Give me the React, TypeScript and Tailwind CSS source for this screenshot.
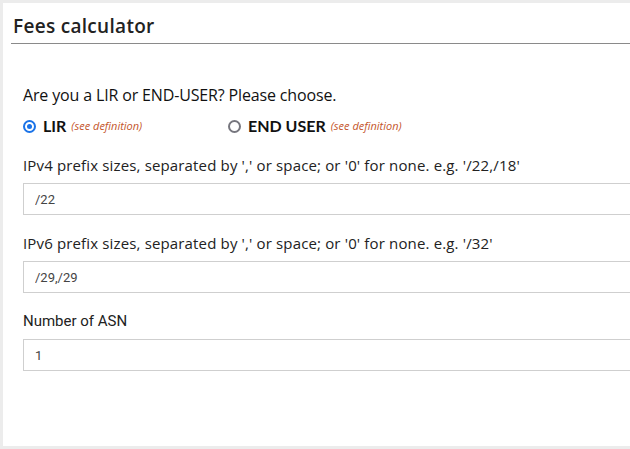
import React, { useState } from 'react';

const Radio = ({ checked }: { checked: boolean }) => (
	<span
		className={
			checked
				? 'flex h-[13px] w-[13px] items-center justify-center rounded-full border-[2px] border-[#1a73e8] bg-white'
				: 'flex h-[13px] w-[13px] items-center justify-center rounded-full border-[2px] border-[#76767e] bg-white'
		}
	>
		{checked && <span className="h-[5px] w-[5px] rounded-full bg-[#1a73e8]" />}
	</span>
);

const Field = ({ label, value, roboto }: { label: string; value: string; roboto?: boolean }) => (
	<div className="flex flex-col">
		<label
			className={
				roboto
					? "text-[15px] leading-[20px] text-[#222] [font-family:Roboto,sans-serif]"
					: "text-[15px] leading-[20px] tracking-[0.15px] text-[#222] [font-family:'Open_Sans',sans-serif]"
			}
		>
			{label}
		</label>
		<input
			defaultValue={value}
			className="mt-[8px] h-[32px] w-[620px] border border-[#cfcfcf] px-[11px] text-[13px] text-[#444] outline-none [font-family:Roboto,sans-serif]"
		/>
	</div>
);

export default function App() {
	const [kind, setKind] = useState('lir');

	return (
		<div className="h-[449px] w-[630px] overflow-hidden bg-[#ececec] pl-[3px] pt-[3px]">
			<div className="h-[443px] w-[640px] bg-white pl-[8px]">
				<h1 className="border-b border-[#8a8a8a] pb-[6px] pl-[2px] pt-[12px] text-[19px] font-semibold leading-[22px] tracking-[0.3px] text-[#222] [font-family:'Open_Sans',sans-serif]">
					Fees calculator
				</h1>

				<div className="pl-[12px] pt-[41px]">
					<p className="text-[16px] leading-[20px] tracking-[-0.15px] text-[#111] [font-family:'Open_Sans',sans-serif]">
						Are you a LIR or END-USER? Please choose.
					</p>

					<div className="mt-[9px] flex items-center text-[#111] [font-family:Lato,sans-serif]">
						<button className="flex w-[205px] items-center" onClick={() => setKind('lir')}>
							<Radio checked={kind === 'lir'} />
							<span className="ml-[7px] text-[16px] font-bold">LIR</span>
							<span className="ml-[5px] text-[11px] italic text-[#c4552b] [font-family:'Open_Sans',sans-serif]">
								(see definition)
							</span>
						</button>
						<button className="flex items-center" onClick={() => setKind('end')}>
							<Radio checked={kind === 'end'} />
							<span className="ml-[7px] text-[16px] font-bold">END USER</span>
							<span className="ml-[5px] text-[11px] italic text-[#c4552b] [font-family:'Open_Sans',sans-serif]">
								(see definition)
							</span>
						</button>
					</div>

					<div className="mt-[17px] flex flex-col gap-[18px]">
						<Field label="IPv4 prefix sizes, separated by ',' or space; or '0' for none. e.g. '/22,/18'" value="/22" />
						<Field label="IPv6 prefix sizes, separated by ',' or space; or '0' for none. e.g. '/32'" value="/29,/29" />
						<Field label="Number of ASN" value="1" roboto />
					</div>
				</div>
			</div>
		</div>
	);
}
